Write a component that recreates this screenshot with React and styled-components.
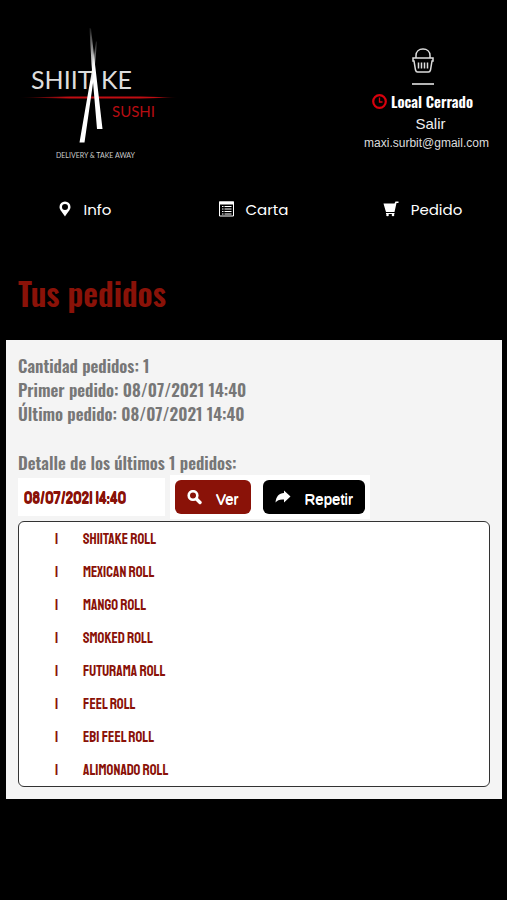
import React from 'react';
import styled, { createGlobalStyle } from 'styled-components';

const narrow = `
  font-family: Oswald, 'Liberation Sans Narrow', Arial, sans-serif;
  font-weight: 600;
`
const display = `
  font-family: Staatliches, 'Bebas Neue', Oswald, Arial, sans-serif;
  font-weight: normal;
`
const GlobalStyle = createGlobalStyle`
  * {
    box-sizing: border-box;
  }
  body {
    margin: 0;
    background: #000;
    color: #fff;
    font-family: 'Liberation Sans', Arial, sans-serif;
  }
`
const Header = styled.header`
  display: grid;
  grid-template-columns: 2fr 1fr;
  height: 184px;
`
const LogoLink = styled.a`
  padding: 20px 0 0 16px;
`
const Account = styled.div`
  display: flex;
  flex-direction: column;
  align-items: center;
  padding-top: 47px;
`
const BasketButton = styled.button`
  display: flex;
  padding: 0 0 10px;
  border: 0;
  border-bottom: 2px solid #b5b5b5;
  background: none;
  color: #ddd;
`
const Status = styled.p`
  ${narrow};
  display: flex;
  align-items: center;
  gap: 4px;
  margin: 4px 0 0;
  font-size: 15px;
  line-height: 24px;
  white-space: nowrap;
`
const Logout = styled.a`
  padding-left: 16px;
  color: #eee;
  font-size: 15px;
  line-height: 22px;
  text-decoration: none;
`
const Email = styled.span`
  padding-left: 8px;
  color: #ddd;
  font-size: 12px;
  line-height: 16px;
`
const Nav = styled.nav`
  display: grid;
  grid-template-columns: repeat(3, 1fr);
  height: 50px;
`
const NavLink = styled.a`
  display: flex;
  align-items: center;
  justify-content: center;
  gap: 12px;
  color: #fff;
  font-family: Poppins, Inter, sans-serif;
  font-size: 15px;
  text-decoration: none;
`
const Title = styled.h1`
  ${narrow};
  margin: 35px 18px 23px;
  color: #8a1208;
  font-size: 32px;
  line-height: 48px;
`
const Panel = styled.section`
  margin: 0 5px 0 6px;
  padding: 14px 12px 12px;
  background: #f4f4f4;
`
const Summary = styled.p`
  ${narrow};
  margin: 0 0 ${p => (p.$last ? '0' : '25px')};
  color: #777;
  font-size: 17px;
  line-height: 24px;
`
const OrderBar = styled.div`
  display: flex;
  align-items: center;
  gap: 5px;
  margin-bottom: 2px;
`
const OrderDate = styled.div`
  ${display};
  width: 147px;
  padding: 2px 6px 0;
  background: #fff;
  color: #8a1208;
  font-size: 17px;
  line-height: 36px;
  text-shadow: 0 1px #8a1208;
`
const Actions = styled.div`
  display: flex;
  gap: 12px;
  padding: 5px;
  background: #fff;
`
const Button = styled.button`
  display: flex;
  align-items: center;
  gap: 14px;
  height: 34px;
  padding: 2px 12px 0;
  border: 0;
  border-radius: 6px;
  background: ${p => (p.$dark ? '#000' : '#8a1208')};
  color: #fff;
  font-family: 'Liberation Sans', Arial, sans-serif;
  font-size: 15px;
  text-shadow: 0 1px #fff;
`
const Items = styled.table`
  ${display};
  width: 100%;
  border: 1px solid #333;
  border-radius: 6px;
  border-spacing: 0;
  background: #fff;
  color: #8a1208;
  font-size: 15px;
`
const Cell = styled.td`
  height: 33px;
  padding: 1px 0 0;
`
const Quantity = styled(Cell)`
  width: 64px;
  padding-left: 36px;
`

const Logo = () => (
  <svg width="164" height="144" viewBox="16 20 164 144" role="img" aria-label="Shiitake Sushi">
    <defs>
      <linearGradient id="line">
        <stop offset="0" stopColor="#c00d12" stopOpacity="0" />
        <stop offset="0.3" stopColor="#c00d12" />
        <stop offset="0.85" stopColor="#c00d12" />
        <stop offset="1" stopColor="#c00d12" stopOpacity="0" />
      </linearGradient>
      <linearGradient id="stick" x1="0" y1="0" x2="0" y2="1">
        <stop offset="0" stopColor="#fff" stopOpacity="0.1" />
        <stop offset="0.4" stopColor="#fff" />
      </linearGradient>
    </defs>
    <g fill="#ddd" fontFamily="Lato, sans-serif" fontSize="25">
      <text x="31" y="89">SHIIT</text>
      <text x="101" y="89">KE</text>
    </g>
    <path d="M18 97.500L70 96.500H140L178 97.500L140 98.500H70Z" fill="url(#line)" />
    <path d="M96 41L97 42L94 76L84.500 142.500H79.500L91 76Z" fill="url(#stick)" />
    <path d="M89.500 28L91 28.500L95 64L102.500 129H97L91.500 64Z" fill="url(#stick)" />
    <text x="112" y="117" fill="#b50d12" fontFamily="Lato, sans-serif" fontSize="15">SUSHI</text>
    <text x="56" y="158" fill="#ccc" fontFamily="Lato, sans-serif" fontSize="7">DELIVERY &amp; TAKE AWAY</text>
  </svg>
)

const BasketIcon = () => (
  <svg width="22" height="26" viewBox="0 0 22 26" fill="none" stroke="currentColor" strokeWidth="1.500">
    <path d="M4 11V8.500C4 4.500 7 2 11 2S18 4.500 18 8.500V11" />
    <path d="M1 11H21V14H20L18.500 23Q18 25 16.500 25H5.500Q4 25 3.500 23L2 14H1Z" />
    <path d="M6.500 15.500V21.500M9.500 15.500V21.500M12.500 15.500V21.500M15.500 15.500V21.500" />
  </svg>
)

const ClockIcon = () => (
  <svg width="15" height="15" viewBox="0 0 15 15" fill="none" stroke="#d8000c">
    <circle cx="7.500" cy="7.500" r="6.300" strokeWidth="2.200" />
    <path d="M7.500 3.500V8H10.500" strokeWidth="1.300" />
  </svg>
)

const PinIcon = () => (
  <svg width="14" height="16" viewBox="0 0 14 16" fill="currentColor">
    <path fillRule="evenodd" d="M7 0.500A5.500 5.500 0 0 0 1.500 6C1.500 9 5 12 7 15.500C9 12 12.500 9 12.500 6A5.500 5.500 0 0 0 7 0.500ZM7 3A3 3 0 1 1 7 9A3 3 0 0 1 7 3Z" />
  </svg>
)

const ListIcon = () => (
  <svg width="15" height="16" viewBox="0 0 15 16" fill="none" stroke="currentColor">
    <path d="M0.500 1H14.500V15H0.500Z" />
    <path d="M0 2H15" strokeWidth="3" />
    <path d="M3 5.500H4.500M5.500 5.500H12.500M3 8H4.500M5.500 8H12.500M3 10.500H4.500M5.500 10.500H12.500M3 13H4.500M5.500 13H12.500" />
  </svg>
)

const CartIcon = () => (
  <svg width="16" height="16" viewBox="0 0 16 16" fill="currentColor">
    <path d="M0.500 2.500H11.500L12.500 0.500H15.500V2H13.500L11.500 11H3L2.500 9.500Z" />
    <path d="M3 12H11.500V13H3Z" />
    <circle cx="4.500" cy="14" r="1.300" />
    <circle cx="10" cy="14" r="1.300" />
  </svg>
)

const SearchIcon = () => (
  <svg width="15" height="16" viewBox="0 0 15 16" fill="none" stroke="currentColor">
    <circle cx="6" cy="5.500" r="4.300" strokeWidth="2.600" />
    <path d="M9.500 9L13 12.500" strokeWidth="3.400" strokeLinecap="round" />
  </svg>
)

const ShareIcon = () => (
  <svg width="16" height="16" viewBox="0 0 16 16" fill="currentColor">
    <path d="M9 0.500L15.500 6.500L9 12.500V9.500C5 9 2.500 10 0.500 12.500C1 6.500 4 3.300 9 3Z" />
  </svg>
)

const items = [
  'SHIITAKE ROLL',
  'MEXICAN ROLL',
  'MANGO ROLL',
  'SMOKED ROLL',
  'FUTURAMA ROLL',
  'FEEL ROLL',
  'EBI FEEL ROLL',
  'ALIMONADO ROLL',
]

const App = () => (
  <>
    <GlobalStyle />
    <Header>
      <LogoLink href="#"><Logo /></LogoLink>
      <Account>
        <BasketButton aria-label="Pedido"><BasketIcon /></BasketButton>
        <Status><ClockIcon />Local Cerrado</Status>
        <Logout href="#">Salir</Logout>
        <Email>maxi.surbit@gmail.com</Email>
      </Account>
    </Header>
    <Nav>
      <NavLink href="#"><PinIcon />Info</NavLink>
      <NavLink href="#"><ListIcon />Carta</NavLink>
      <NavLink href="#"><CartIcon />Pedido</NavLink>
    </Nav>
    <main>
      <Title>Tus pedidos</Title>
      <Panel>
        <Summary>
          Cantidad pedidos: 1<br />
          Primer pedido: 08/07/2021 14:40<br />
          Último pedido: 08/07/2021 14:40
        </Summary>
        <Summary $last>Detalle de los últimos 1 pedidos:</Summary>
        <OrderBar>
          <OrderDate>08/07/2021 14:40</OrderDate>
          <Actions>
            <Button><SearchIcon />Ver</Button>
            <Button $dark><ShareIcon />Repetir</Button>
          </Actions>
        </OrderBar>
        <Items>
          <tbody>
            {items.map(name => (
              <tr key={name}>
                <Quantity>1</Quantity>
                <Cell>{name}</Cell>
              </tr>
            ))}
          </tbody>
        </Items>
      </Panel>
    </main>
  </>
)

export default App;
